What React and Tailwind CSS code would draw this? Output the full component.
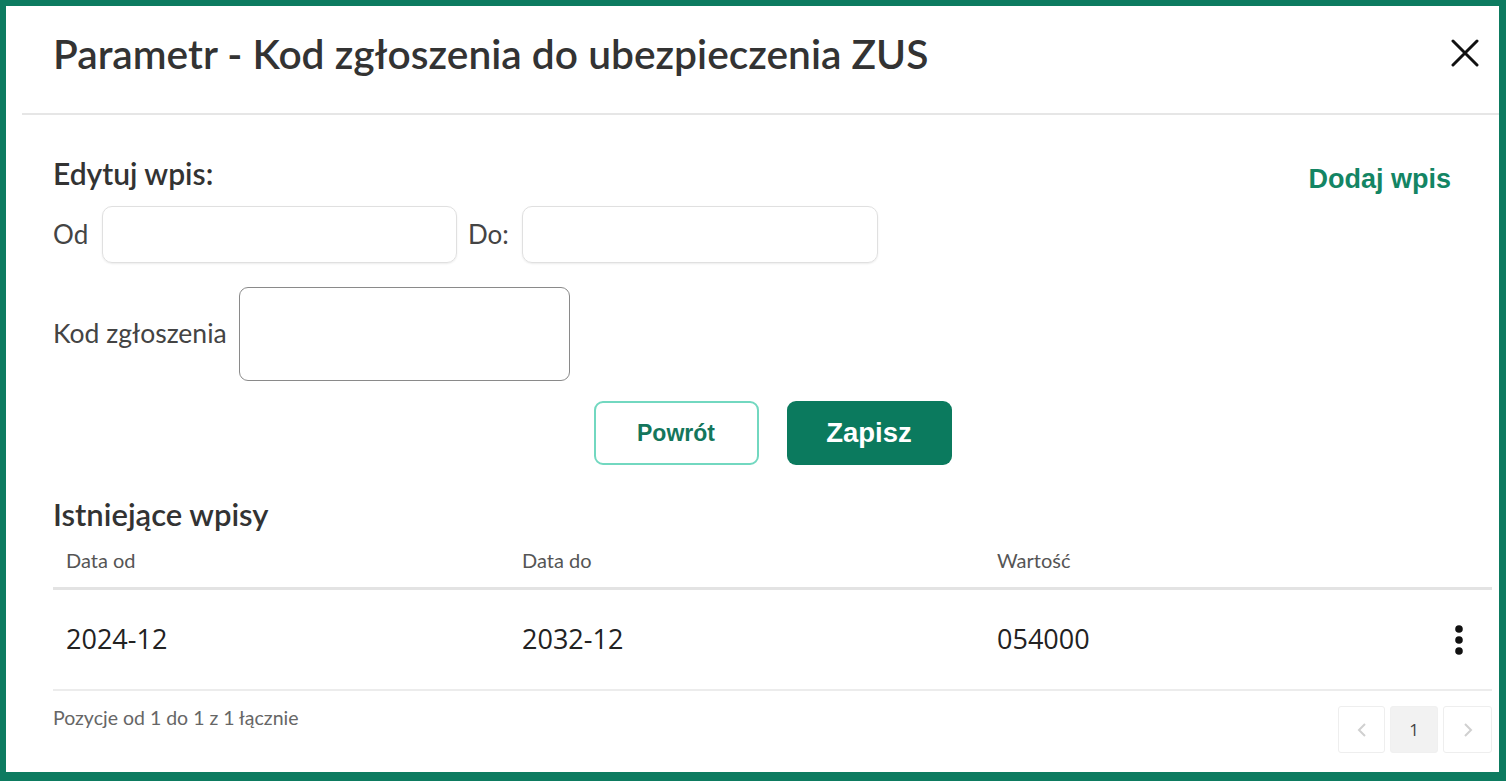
import React from "react";

export default function App() {
  const lato = { fontFamily: "Lato, 'Open Sans', sans-serif" };
  return (
    <div className="w-[1506px] h-[781px] bg-[#0d7b60] pt-[6px] pl-[6px] pr-[7px] pb-[9px]">
      <div className="w-full h-full bg-white flex flex-col" style={lato}>
        {/* header */}
        <div className="h-[107px] flex items-center justify-between pl-[47px] pr-[19px]">
          <h1 className="text-[40.7px] font-semibold text-[#333333] leading-none -mt-[10px]">
            Parametr - Kod zgłoszenia do ubezpieczenia ZUS
          </h1>
          <button className="w-[30px] h-[30px] flex items-center justify-center -mt-[14px]">
            <svg width="28" height="28" viewBox="0 0 28 28">
              <path d="M2 2 L26 26 M26 2 L2 26" stroke="#111" strokeWidth="3" strokeLinecap="round" />
            </svg>
          </button>
        </div>
        <div className="ml-[16px] h-[2px] bg-[#e6e6e6]" />

        {/* body */}
        <div className="pl-[47px] pr-[7px] flex flex-col">
          <div className="flex justify-between items-start mt-[40px]">
            <div className="text-[30px] font-semibold text-[#333333] leading-[36px]">Edytuj wpis:</div>
            <button
              className="mr-[41px] mt-[8px] text-[27px] font-bold text-[#138564] leading-[32px]"
              style={{ fontFamily: "'Liberation Sans', Arial, sans-serif" }}
            >
              Dodaj wpis
            </button>
          </div>

          <div className="flex items-center mt-[11px] h-[57px]">
            <span className="text-[26px] text-[#444444] w-[49px]">Od</span>
            <input className="w-[355px] h-[57px] rounded-[10px] border border-[#e0e0e0] shadow-[0_1px_2px_rgba(0,0,0,0.08)] outline-none" />
            <span className="text-[26px] text-[#444444] ml-[11px] w-[54px]">Do:</span>
            <input className="w-[356px] h-[57px] rounded-[10px] border border-[#e0e0e0] shadow-[0_1px_2px_rgba(0,0,0,0.08)] outline-none" />
          </div>

          <div className="flex items-center mt-[24px]">
            <span className="text-[26.5px] text-[#444444] w-[186px]">Kod zgłoszenia</span>
            <input className="w-[331px] h-[94px] rounded-[9px] border border-[#8a8a8a] outline-none" />
          </div>

          <div
            className="flex justify-center gap-[28px] mt-[20px]"
            style={{ fontFamily: "'Liberation Sans', Arial, sans-serif" }}
          >
            <button className="w-[165px] h-[64px] rounded-[9px] border-2 border-[#72d8c0] bg-white text-[#14765c] text-[23px] font-bold">
              Powrót
            </button>
            <button className="w-[165px] h-[64px] rounded-[9px] bg-[#0b7a5e] text-white text-[27.5px] font-bold">
              Zapisz
            </button>
          </div>

          <div className="mt-[31px] text-[31px] font-semibold text-[#333333] leading-[36px]">Istniejące wpisy</div>

          {/* table */}
          <div>
            <div className="grid grid-cols-[456px_475px_1fr_60px] h-[58px] items-center border-b-[3px] border-[#e3e3e3] text-[20px] text-[#555555] pl-[13px]">
              <span>Data od</span>
              <span>Data do</span>
              <span>Wartość</span>
              <span />
            </div>
            <div
              className="grid grid-cols-[456px_475px_1fr_60px] h-[101px] items-center border-b-[2px] border-[#ececec] text-[27px] text-[#222222] pl-[13px]"
              style={{ fontFamily: "'Open Sans', 'Noto Sans', sans-serif" }}
            >
              <span>2024-12</span>
              <span>2032-12</span>
              <span>054000</span>
              <span className="flex justify-start pl-[22px]">
                <svg width="10" height="30" viewBox="0 0 10 30">
                  <circle cx="5" cy="4" r="3.8" fill="#111" />
                  <circle cx="5" cy="15" r="3.8" fill="#111" />
                  <circle cx="5" cy="26" r="3.8" fill="#111" />
                </svg>
              </span>
            </div>
          </div>

          <div className="flex justify-between items-start mt-[15px]">
            <span className="text-[19.5px] text-[#666666] leading-[24px]">Pozycje od 1 do 1 z 1 łącznie</span>
            <div className="flex gap-[5px]" style={{ fontFamily: "'Open Sans', 'Noto Sans', sans-serif" }}>
              <div className="w-[47px] h-[47px] rounded-[3px] border border-[#eeeeee] flex items-center justify-center">
                <svg width="10" height="16" viewBox="0 0 10 16">
                  <path d="M8 2 L2 8 L8 14" fill="none" stroke="#d0d0d0" strokeWidth="2" />
                </svg>
              </div>
              <div className="w-[48px] h-[47px] rounded-[3px] bg-[#f2f2f2] border border-[#f0f0f0] flex items-center justify-center text-[17px] text-[#444444]">
                1
              </div>
              <div className="w-[49px] h-[47px] rounded-[3px] border border-[#eeeeee] flex items-center justify-center">
                <svg width="10" height="16" viewBox="0 0 10 16">
                  <path d="M2 2 L8 8 L2 14" fill="none" stroke="#d0d0d0" strokeWidth="2" />
                </svg>
              </div>
            </div>
          </div>
        </div>
      </div>
    </div>
  );
}
